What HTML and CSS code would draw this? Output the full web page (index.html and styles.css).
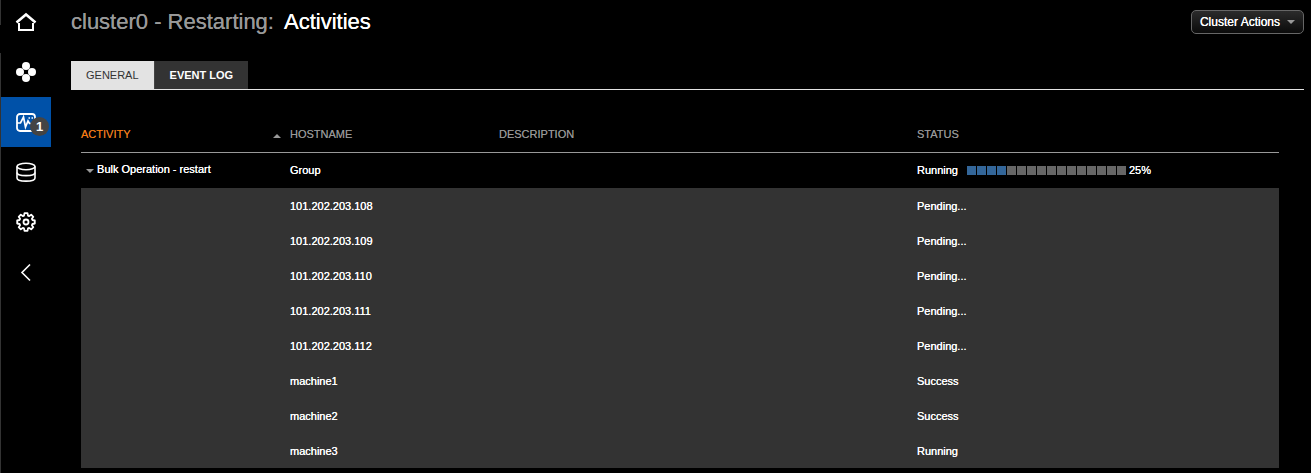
FILE: index.html
```html
<!DOCTYPE html>
<html lang="en">
<head>
    <meta charset="UTF-8">
    <meta name="viewport" content="width=device-width, initial-scale=1.0">
    <title>cluster0 - Activities</title>
    <link rel="stylesheet" href="styles.css">
</head>
<body>
    <nav class="sidebar" aria-label="Main">
        <a class="nav-item home" href="#" aria-label="Home">
            <svg width="22" height="20" viewBox="0 0 22 20" fill="none" stroke="#fff">
                <path d="M1.500 10.500 L11 2.500 L20.500 10.500" stroke-width="2.600"/>
                <path d="M4 11 V18 H18 V11" stroke-width="2"/>
            </svg>
        </a>
        <a class="nav-item" href="#" aria-label="Nodes">
            <svg width="20" height="20" viewBox="0 0 20 20" fill="#fff">
                <circle cx="10" cy="4" r="4"/>
                <circle cx="4" cy="10" r="4"/>
                <circle cx="16" cy="10" r="4"/>
                <circle cx="10" cy="16" r="4"/>
            </svg>
        </a>
        <a class="nav-item active" href="#" aria-label="Activities">
            <svg width="20" height="20" viewBox="0 0 20 20" fill="none" stroke="#fff">
                <rect x="1" y="2" width="18" height="17" rx="3" stroke-width="1.800"/>
                <path d="M1 11 H4.500 L7.500 5 L9.500 15 L12 9 L13.500 11.500 H19" stroke-width="1.700"/>
                <path d="M12.500 6 H14 M15.500 6 H17" stroke-width="1.500"/>
            </svg>
            <span class="badge">1</span>
        </a>
        <a class="nav-item" href="#" aria-label="Keyspaces">
            <svg width="20" height="20" viewBox="0 0 20 20" fill="none" stroke="#fff" stroke-width="1.600">
                <ellipse cx="10" cy="4.500" rx="9" ry="3.200"/>
                <path d="M1 4.500 V16 C1 20.200 19 20.200 19 16 V4.500"/>
                <path d="M1 10.500 C1 14.600 19 14.600 19 10.500"/>
            </svg>
        </a>
        <a class="nav-item" href="#" aria-label="Settings">
            <svg width="20" height="20" viewBox="0 0 20 20" fill="none" stroke="#fff" stroke-width="1.800" stroke-linejoin="round">
                <path d="M8.500 1.200 H11.500 L12 3.600 L13.200 4.100 L15.200 2.700 L17.300 4.800 L15.900 6.800 L16.400 8 L18.800 8.500 V11.500 L16.400 12 L15.900 13.200 L17.300 15.200 L15.200 17.300 L13.200 15.900 L12 16.400 L11.500 18.800 H8.500 L8 16.400 L6.800 15.900 L4.800 17.300 L2.700 15.200 L4.100 13.200 L3.600 12 L1.200 11.500 V8.500 L3.600 8 L4.100 6.800 L2.700 4.800 L4.800 2.700 L6.800 4.100 L8 3.600 Z"/>
                <circle cx="10" cy="10" r="2.500"/>
            </svg>
        </a>
        <button class="nav-item collapse" type="button" aria-label="Collapse">
            <svg width="20" height="20" viewBox="0 0 20 20" fill="none" stroke="#fff" stroke-width="1.600">
                <path d="M14 2.500 L6 10.500 L14 18.500"/>
            </svg>
        </button>
    </nav>

    <main class="content">
        <header class="page-header">
            <h1><span class="cluster-name">cluster0 - Restarting:</span> <span class="page-name">Activities</span></h1>
            <button class="cluster-actions" type="button">Cluster Actions <span class="arrow down"></span></button>
        </header>

        <div class="tabs">
            <a class="tab selected" href="#">GENERAL</a>
            <a class="tab" href="#">EVENT LOG</a>
        </div>

        <table class="activities">
            <colgroup>
                <col class="col-activity">
                <col class="col-hostname">
                <col class="col-description">
                <col class="col-status">
            </colgroup>
            <thead>
                <tr>
                    <th class="sorted"><span class="sort-label">ACTIVITY <span class="arrow up"></span></span></th>
                    <th>HOSTNAME</th>
                    <th>DESCRIPTION</th>
                    <th>STATUS</th>
                </tr>
            </thead>
            <tbody>
                <tr class="group">
                    <td class="group-name"><span class="arrow down"></span> Bulk Operation - restart</td>
                    <td>Group</td>
                    <td></td>
                    <td>
                        <div class="status">
                            <span>Running</span>
                            <div class="progress">
                                <i class="done"></i><i class="done"></i><i class="done"></i><i class="done"></i>
                                <i></i><i></i><i></i><i></i><i></i><i></i><i></i><i></i><i></i><i></i><i></i><i></i>
                            </div>
                            <span>25%</span>
                        </div>
                    </td>
                </tr>
                <tr><td></td><td>101.202.203.108</td><td></td><td>Pending...</td></tr>
                <tr><td></td><td>101.202.203.109</td><td></td><td>Pending...</td></tr>
                <tr><td></td><td>101.202.203.110</td><td></td><td>Pending...</td></tr>
                <tr><td></td><td>101.202.203.111</td><td></td><td>Pending...</td></tr>
                <tr><td></td><td>101.202.203.112</td><td></td><td>Pending...</td></tr>
                <tr><td></td><td>machine1</td><td></td><td>Success</td></tr>
                <tr><td></td><td>machine2</td><td></td><td>Success</td></tr>
                <tr><td></td><td>machine3</td><td></td><td>Running</td></tr>
            </tbody>
        </table>
    </main>
</body>
</html>
```
FILE: styles.css
```css
* {
    box-sizing: border-box;
}

body {
    display: flex;
    min-height: 100vh;
    margin: 0;
    background-color: #000;
    color: #fff;
    font-family: "Liberation Sans", Arial, Helvetica, sans-serif;
    font-size: 11px;
}

a {
    color: inherit;
    text-decoration: none;
}

/* Sidebar */
.sidebar {
    display: flex;
    flex-direction: column;
    flex: none;
    width: 51px;
    border-left: 1px solid #333;
}

.nav-item {
    position: relative;
    display: flex;
    align-items: center;
    justify-content: center;
    height: 50px;
    padding: 0;
    border: 0;
    background: none;
}

.nav-item.home {
    height: 47px;
    padding-bottom: 4px;
}

/* break in the sidebar edge below the home icon */
.nav-item.home::before {
    content: "";
    position: absolute;
    top: 25px;
    left: -1px;
    width: 1px;
    height: 28px;
    background-color: #000;
}

.nav-item.active {
    background-color: #0051a8;
}

.badge {
    position: absolute;
    right: 2px;
    bottom: 11px;
    width: 19px;
    height: 19px;
    border-radius: 50%;
    background-color: #444;
    font-size: 13px;
    font-weight: bold;
    line-height: 19px;
    text-align: center;
}

/* Page header */
.content {
    flex: 1;
    padding: 10px 7px 0 20px;
}

.page-header {
    display: flex;
    justify-content: space-between;
    align-items: center;
    height: 24px;
}

h1 {
    display: flex;
    gap: 10px;
    margin: 0;
    font-size: 22px;
    font-weight: normal;
    line-height: 24px;
}

.cluster-name {
    color: #999;
    text-shadow: 0 0 #999;
}

.page-name {
    text-shadow: 0 0 #fff;
}

.cluster-actions {
    display: flex;
    align-items: center;
    gap: 7px;
    height: 24px;
    padding: 0 8px;
    border: 1px solid #666;
    border-radius: 5px;
    background: linear-gradient(#2b2b2b, #0a0a0a);
    color: #fff;
    font-family: inherit;
    font-size: 12px;
    text-shadow: 0 0 #fff;
}

.arrow {
    display: inline-block;
    border: 4px solid transparent;
}

.arrow.down {
    border-top-color: #999;
    border-bottom: 0;
}

.arrow.up {
    border-bottom-color: #999;
    border-top: 0;
}

/* Tabs */
.tabs {
    display: flex;
    margin-top: 27px;
    border-bottom: 1px solid #e3e3e3;
}

.tab {
    padding: 0 15px;
    background-color: #333;
    font-weight: bold;
    line-height: 28px;
}

.tab.selected {
    border-right: 1px solid #444;
    background-color: #e3e3e3;
    color: #333;
    font-weight: normal;
}

/* Activities table */
.activities {
    width: calc(100% - 35px);
    margin: 27px 25px 0 10px;
    border-collapse: collapse;
    table-layout: fixed;
}

.col-activity,
.col-hostname {
    width: 209px;
}

.col-description {
    width: 418px;
}

th {
    height: 35px;
    padding: 0;
    border-bottom: 1px solid #999;
    color: #999;
    font-weight: normal;
    text-align: left;
    text-shadow: 0 0 #666;
}

th.sorted {
    color: #f70;
}

.sort-label {
    display: flex;
    justify-content: space-between;
    align-items: center;
    padding-right: 9px;
}

.sort-label .arrow {
    margin-top: 4px;
}

td {
    height: 35px;
    padding: 0;
    background-color: #333;
    text-shadow: 0 0 #fff;
}

.group td {
    height: 36px;
    background-color: #000;
}

.group .group-name {
    padding: 0 0 3px 5px;
}

.status {
    display: flex;
    align-items: center;
}

.progress {
    display: flex;
    gap: 1px;
    margin: 0 3px 0 9px;
}

.progress i {
    width: 9px;
    height: 9px;
    background-color: #666;
}

.progress .done {
    background-color: #369;
}
```
